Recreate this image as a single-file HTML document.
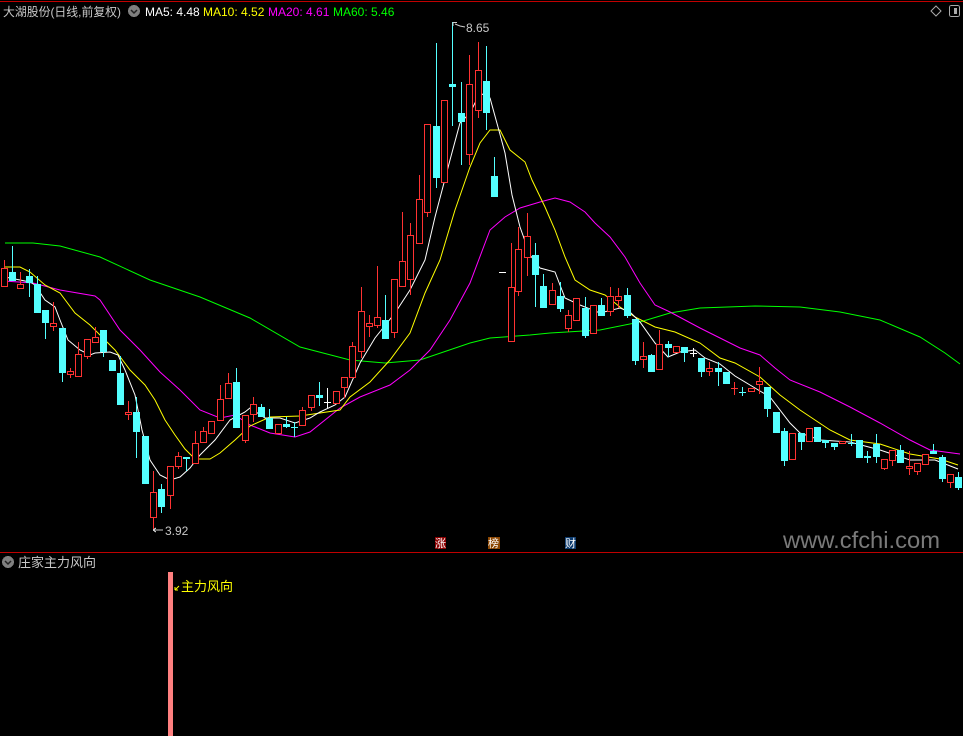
<!DOCTYPE html>
<html><head><meta charset="utf-8"><style>
html,body{margin:0;padding:0;background:#000;width:963px;height:736px;overflow:hidden}
svg{display:block}
text{font-family:"Liberation Sans","Noto Sans CJK SC",sans-serif}
</style></head><body>
<svg id="s" width="963" height="736" xmlns="http://www.w3.org/2000/svg" shape-rendering="crispEdges">
<rect width="963" height="736" fill="#000"/>
<line x1="0" y1="1.5" x2="963" y2="1.5" stroke="#c00000" stroke-width="1"/>
<line x1="0" y1="552.5" x2="963" y2="552.5" stroke="#c00000" stroke-width="1"/>
<g id="lines" fill="none" stroke-width="1" shape-rendering="auto">
<polyline stroke="#00ff00" points="5,243 33,243 60,246 100,257 150,280 200,297 250,318 300,347 350,360 385,363 420,360 470,343 490,338 530,335 550,333 600,330 640,322 670,313 700,308 755,306 800,307 840,312 880,320 920,337 945,353 960,364"/>
<polyline stroke="#ff00ff" points="4,281 33,283 60,290 95,296 100,300 120,330 140,350 160,372 180,390 200,410 220,418 235,415 250,425 270,433 295,437 310,432 340,408 360,397 390,385 410,370 430,350 450,320 470,283 490,230 505,217 520,208 540,202 555,198 570,202 585,212 595,223 610,237 625,257 640,283 655,305 670,312 700,328 720,338 740,348 760,355 775,368 790,380 820,392 850,407 880,423 910,440 930,450 960,454"/>
<polyline stroke="#ffff00" points="5,267 20,267 30,272 45,285 60,293 75,313 90,325 105,340 115,350 130,370 145,385 155,400 165,420 175,435 185,449 195,459 210,459 220,453 235,440 250,426 270,417 300,416 320,413 340,410 350,397 370,382 390,360 410,333 425,293 440,260 455,210 470,167 480,143 490,130 500,130 510,150 525,162 532,180 545,207 555,230 565,257 575,280 590,290 605,295 620,307 635,317 655,327 675,332 700,343 720,358 735,363 760,377 780,395 800,410 830,430 850,440 880,444 910,454 940,459 958,465"/>
<polyline stroke="#ffffff" points="5,277 20,280 30,282 35,285 45,300 55,307 60,320 68,340 80,350 90,355 95,353 110,352 118,355 125,370 135,395 142,430 150,460 160,475 170,480 180,477 190,468 200,455 215,440 230,420 245,412 250,408 265,418 280,418 295,423 310,418 320,412 335,405 345,397 360,363 375,338 395,313 410,290 425,260 435,217 450,160 460,123 470,113 480,93 490,98 498,127 505,153 512,195 520,227 530,255 540,268 555,272 565,298 580,305 600,313 620,308 630,312 640,322 655,343 668,357 680,352 695,350 705,358 720,364 735,376 750,385 770,397 790,423 800,433 820,440 850,442 880,450 910,460 935,460 958,469"/>
</g>
<g id="c"></g>
<!-- header -->
<text x="3" y="16" font-size="12" fill="#c8c8c8" textLength="118" lengthAdjust="spacingAndGlyphs">大湖股份(日线,前复权)</text>
<circle cx="134" cy="11" r="6" fill="#808080"/>
<polyline points="131,10 134,13 137,10" fill="none" stroke="#222" stroke-width="1.5" shape-rendering="auto"/>
<text x="145" y="16" font-size="12" fill="#ffffff">MA5: 4.48</text>
<text x="203" y="16" font-size="12" fill="#ffff00">MA10: 4.52</text>
<text x="268" y="16" font-size="12" fill="#ff00ff">MA20: 4.61</text>
<text x="333" y="16" font-size="12" fill="#00ff00">MA60: 5.46</text>
<polygon points="936,6 941,11 936,16 931,11" fill="none" stroke="#aaa" shape-rendering="auto"/>
<rect x="949.5" y="5.5" width="10" height="11" rx="2" fill="none" stroke="#aaa"/>
<rect x="954" y="8" width="3" height="6" fill="#aaa"/>
<!-- price labels -->
<line x1="453" y1="22" x2="453" y2="26" stroke="#ccc"/>
<line x1="453" y1="22.5" x2="457" y2="22.5" stroke="#ccc"/>
<polyline points="455,24 460,26 465,27" fill="none" stroke="#ccc" shape-rendering="auto"/>
<text x="466" y="32" font-size="12" fill="#c8c8c8">8.65</text>
<path d="M153,530 H163 M153,530 l3,-2 M153,530 l3,2" stroke="#ccc" fill="none"/>
<text x="165" y="535" font-size="12" fill="#c8c8c8">3.92</text>
<!-- badges -->
<rect x="435" y="537" width="11" height="12" fill="#8b0000"/>
<text x="435" y="547" font-size="11" fill="#fff">涨</text>
<rect x="488" y="537" width="12" height="12" fill="#8b4500"/>
<text x="488" y="547" font-size="11" fill="#fff">榜</text>
<rect x="565" y="537" width="11" height="12" fill="#0d3b6e"/>
<text x="565" y="547" font-size="11" fill="#fff">财</text>
<text x="783" y="548" font-size="23" fill="#7a7a7a" textLength="157" lengthAdjust="spacingAndGlyphs">www.cfchi.com</text>
<!-- indicator pane -->
<circle cx="8" cy="562" r="6" fill="#808080"/>
<polyline points="5,561 8,564 11,561" fill="none" stroke="#222" stroke-width="1.5" shape-rendering="auto"/>
<text x="18" y="567" font-size="13" fill="#c8c8c8">庄家主力风向</text>
<rect x="168" y="572" width="5" height="164" fill="#ff8080"/>
<path d="M175,590 l4,-4 M175,590 v-3 M175,590 h3" stroke="#ffff00" fill="none" shape-rendering="auto"/>
<text x="181" y="591" font-size="13" fill="#ffff00">主力风向</text>
</svg>
<script>
var d=[
[4,268,286,260,287,'R'],[12,272,281,246,281,'C'],[20,284,288,272,289,'R'],[29,276,283,269,297,'C'],[37,284,313,276,313,'C'],[45,310,323,310,339,'C'],[53,323,326,302,331,'R'],[62,328,373,328,382,'C'],[70,371,374,368,378,'R'],[78,354,376,342,376,'R'],[87,339,356,339,359,'R'],[95,337,342,327,342,'R'],[103,330,352,330,357,'C'],[112,360,371,360,371,'C'],[120,373,405,356,405,'C'],[128,412,414,401,420,'R'],[136,412,432,397,458,'C'],[145,436,484,436,484,'C'],[153,492,517,471,530,'R'],[161,489,507,484,513,'C'],[170,466,495,466,509,'R'],[178,456,466,452,469,'R'],[186,457,459,457,471,'C'],[195,443,463,431,463,'R'],[203,431,442,427,442,'R'],[211,421,433,421,433,'R'],[220,399,420,385,420,'R'],[228,383,398,373,398,'R'],[236,382,428,368,428,'C'],[245,415,440,415,443,'R'],
[253,404,414,397,422,'R'],[261,407,417,404,417,'C'],[269,418,429,409,429,'C'],[278,424,433,424,433,'R'],[286,424,427,417,428,'C'],[294,427,427,422,437,'C'],[302,410,425,407,425,'R'],[311,395,407,395,411,'R'],[319,395,398,382,406,'C'],[327,402,402,388,408,'W'],[336,391,403,391,403,'R'],[344,377,387,377,398,'R'],[352,346,377,342,377,'R'],[361,311,351,287,358,'R'],[369,323,326,315,337,'R'],[377,317,325,266,328,'R'],[385,320,339,295,339,'C'],[394,279,332,279,338,'R'],[402,261,286,212,286,'R'],[410,235,279,223,295,'R'],[419,199,243,175,243,'R'],[427,124,212,124,217,'R'],[436,126,178,43,188,'C'],[444,100,182,100,182,'R'],[452,84,87,22,126,'C'],[461,113,122,82,165,'C'],[469,84,154,55,165,'R'],[478,70,110,42,118,'R'],[486,81,113,46,130,'C'],[494,176,197,157,197,'C'],[502,272,272,272,272,'W'],[511,287,341,243,341,'R'],[518,249,291,227,296,'R'],[527,236,257,213,276,'R'],
[535,255,275,243,307,'C'],[543,286,308,274,308,'C'],[552,290,304,283,304,'R'],[560,296,309,282,312,'C'],[568,315,328,310,332,'R'],[576,298,320,298,320,'R'],[585,308,336,297,338,'C'],[593,305,333,305,333,'R'],[601,305,316,298,316,'C'],[610,296,311,287,316,'R'],[618,296,300,288,308,'R'],[627,295,316,288,318,'C'],[635,319,361,319,365,'C'],[643,356,359,342,368,'R'],[651,355,372,354,372,'C'],[659,344,369,330,369,'R'],[668,344,348,341,357,'C'],[676,346,352,346,352,'R'],[684,347,353,347,362,'C'],[693,353,353,348,357,'W'],[701,358,372,358,377,'C'],[709,368,371,362,376,'R'],[718,368,372,362,386,'C'],[726,372,384,372,384,'C'],[734,388,388,382,395,'R'],[742,392,392,387,396,'C'],[751,388,391,388,391,'R'],[759,381,384,367,394,'R'],[767,387,409,387,417,'C'],[776,412,433,412,433,'C'],[784,431,461,428,466,'C'],[792,433,459,433,459,'R'],[801,433,442,433,450,'C'],[809,428,441,428,441,'R'],[817,427,442,427,442,'C'],[825,440,443,440,448,'C'],[834,443,447,443,450,'C'],[842,441,443,441,443,'R'],[851,443,443,434,446,'C'],[859,440,458,440,458,'C'],[867,456,458,451,463,'C'],[876,444,457,434,463,'C'],[884,459,468,459,470,'R'],[892,450,460,450,466,'R'],[900,450,463,445,463,'C'],[909,466,468,451,475,'R'],[917,463,471,463,475,'R'],[925,454,464,454,464,'R'],[933,451,454,444,454,'C'],[942,457,479,455,482,'C'],[950,474,482,474,488,'R'],[958,477,488,472,490,'C']];
var h='';
d.forEach(function(c){var x=c[0],t=c[1],b=c[2],hi=c[3],lo=c[4],k=c[5];
var col=k=='R'?'#ff3232':k=='C'?'#54ffff':'#ffffff';
h+='<line x1="'+(x+0.5)+'" y1="'+hi+'" x2="'+(x+0.5)+'" y2="'+lo+'" stroke="'+col+'"/>';
if(b-t<2){h+='<rect x="'+(x-3)+'" y="'+t+'" width="7" height="'+Math.max(1,b-t+1)+'" fill="'+col+'"/>';}
else if(k=='R'){h+='<rect x="'+(x-3)+'.5" y="'+t+'.5" width="6" height="'+(b-t)+'" fill="#000" stroke="'+col+'"/>';}
else{h+='<rect x="'+(x-3)+'" y="'+t+'" width="7" height="'+(b-t)+'" fill="'+col+'"/>';}
});
document.getElementById('c').innerHTML=h;
</script>
</body></html>
